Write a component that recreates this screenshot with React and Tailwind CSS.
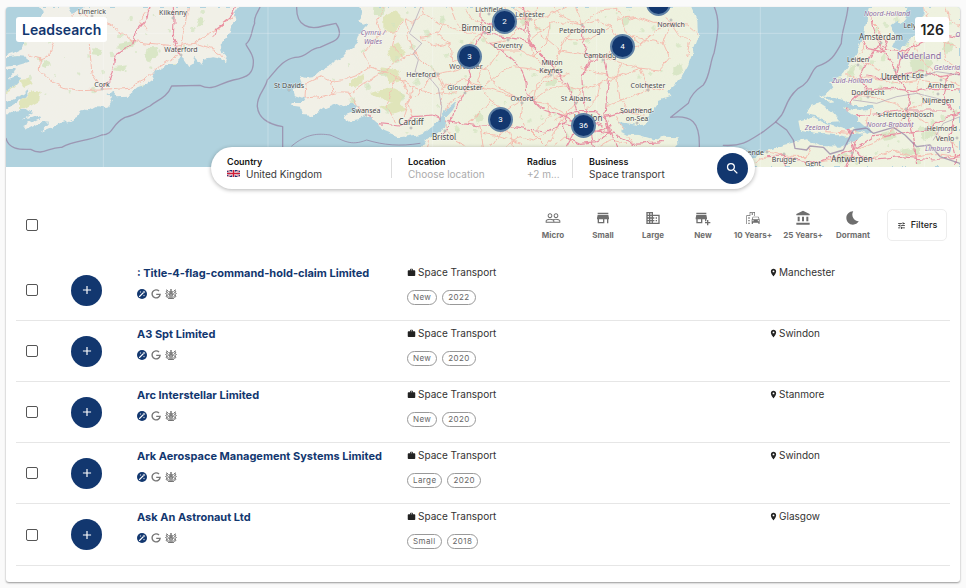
import {
  MdPeopleOutline, MdStore, MdDomain, MdAddBusiness, MdOutlineEmojiTransportation,
  MdAccountBalance, MdBedtime, MdTune, MdSearch, MdLocationOn, MdWork, MdAdd,
} from "react-icons/md";

const companies = [
  { name: ": Title-4-flag-command-hold-claim Limited", tags: ["New", "2022"], town: "Manchester" },
  { name: "A3 Spt Limited", tags: ["New", "2020"], town: "Swindon" },
  { name: "Arc Interstellar Limited", tags: ["New", "2020"], town: "Stanmore" },
  { name: "Ark Aerospace Management Systems Limited", tags: ["Large", "2020"], town: "Swindon" },
  { name: "Ask An Astronaut Ltd", tags: ["Small", "2018"], town: "Glasgow" },
];

const categories = [
  { label: "Micro", Icon: MdPeopleOutline },
  { label: "Small", Icon: MdStore },
  { label: "Large", Icon: MdDomain },
  { label: "New", Icon: MdAddBusiness },
  { label: "10 Years+", Icon: MdOutlineEmojiTransportation },
  { label: "25 Years+", Icon: MdAccountBalance },
  { label: "Dormant", Icon: MdBedtime },
];

const clusters = [
  { x: 486, y: 2, count: "2" },
  { x: 451, y: 37, count: "3" },
  { x: 604, y: 27, count: "4" },
  { x: 482, y: 100, count: "3" },
  { x: 565, y: 106, count: "36" },
  { x: 640, y: -16, count: "" },
];

// Map geometry uses three units to a pixel.
const land = [
  "M120 21L132 40 110 60 92 72 65 80 72 104 50 112 70 128 66 145 35 160 18 165V172L50 168 78 170 82 185 45 196 18 200V212L45 208 40 220 24 236 50 226 70 232 40 262 18 276V308L50 292 80 276 92 268 70 296 35 318 18 330V345L45 332 85 328 100 335 66 362 110 346 125 352 70 378 78 390 125 366 148 368 122 396 160 380 190 364 200 368 235 350 245 330 262 334 290 318 322 324 336 296 322 285 340 278 352 292 385 290 392 278 412 262 440 252 465 235 455 215 480 208 500 195 530 195 545 170 556 180 568 198 578 192 582 170 604 195 606 176 640 172 662 176 675 187 680 165 662 148 658 135 680 112 690 95 694 75 706 65 702 45 717 21Z",
  "M1078 21L1086 45 1075 62 1102 72 1078 104 1070 128 1052 145 1030 172 1002 186 990 198 960 212 938 232 915 234 900 230 908 252 900 266 880 270 884 284 918 296 912 306 880 306 868 316 900 320 905 345 940 348 970 326 1010 310 1030 322 1052 306 1074 318 1062 336 1035 346 1042 362 1080 358 1108 346 1132 366 1152 392 1200 412 1250 404 1282 392 1310 370 1335 335 1372 302 1358 328 1338 350 1332 384 1310 400 1280 418 1255 450 1240 501H2000L2020 450 2038 430 2036 412 1990 410 1960 418 1915 404 1880 404 1860 394 1880 378 1930 376 1952 340 1978 302 2014 290 2002 274 2040 238 2064 196 2078 160 2094 115 2092 62 2074 21Z",
  "M2606 21L2600 60 2590 110 2570 160 2532 218 2490 248 2500 262 2478 284 2510 306 2540 330 2570 350 2580 376 2540 392 2500 376 2460 362 2440 368 2450 382 2480 402 2530 408 2560 420 2520 440 2460 438 2420 418 2390 422 2350 432 2310 450 2280 462 2240 480 2220 501H2880V21Z",
  "M2430 320L2460 312 2500 338 2520 364 2490 366 2460 350 2420 342Z",
  "M2395 362L2440 350 2480 372 2530 386 2518 398 2450 400 2400 388Z",
  "M2460 284L2500 284 2530 306 2490 312Z",
];

const inlets = [
  "M2722 21H2768V70L2752 100 2715 132 2698 152 2676 140 2690 110 2672 76 2690 62 2702 72 2718 50Z",
  "M2470 286L2530 300 2560 318 2620 318V326L2560 330 2512 316Z",
  "M2500 326L2560 346 2600 382 2620 394 2604 402 2560 386 2530 362Z",
  "M2410 405L2470 414 2540 410 2590 398 2560 428 2520 424 2460 432Z",
  "M1858 366L1920 376 1990 360 1980 420 1920 404 1880 402Z",
  "M205 21L215 42 250 24V21Z",
];

const woods = [
  "M355 128L400 120 406 130 380 150 345 145Z", "M440 140L470 142 475 165 450 185 436 165Z", "M600 50L612 55 602 78 590 85Z",
  "M280 145L305 150 300 166 278 162Z", "M345 200L382 196 370 212 342 208Z", "M130 180L152 190 140 204 126 198Z",
  "M18 245L50 228 68 232 35 270 18 280Z", "M60 300L100 272 122 275 118 300 60 332Z", "M18 175L50 168 82 180 40 192Z",
  "M60 240L90 236 98 252 72 264Z", "M1150 50L1190 30 1210 60 1180 100 1150 90Z", "M1160 150L1195 130 1215 160 1180 190Z",
  "M1050 238L1092 222 1086 250 1050 262Z", "M1110 280L1170 260 1215 282 1200 312 1160 300Z", "M1140 202L1190 210 1205 240 1165 250Z",
  "M1140 320L1200 300 1218 330 1180 345Z", "M1120 21H1160L1142 50 1118 40Z", "M1420 350L1445 330 1450 350 1430 370Z",
  "M1640 240L1672 232 1665 258 1640 262Z", "M1860 60L1882 50 1890 72 1870 80Z", "M2020 205L2042 190 2050 214 2020 230Z",
  "M2730 180L2762 160 2800 190 2770 222 2738 214Z", "M2830 120L2860 130 2850 160 2826 150Z", "M2640 400L2682 390 2690 412 2650 420Z",
  "M2760 400L2800 380 2810 400 2772 424Z", "M2550 200L2568 188 2560 220 2540 232Z", "M2700 450L2752 440 2760 462 2715 470Z",
  "M1560 60L1580 42 1588 60 1570 78Z", "M1750 350L1780 340 1785 360 1760 370Z", "M2500 470L2540 462 2550 480 2510 490Z",
];

// Small scattered copses, spread over each region by a fixed stride.
const copses = Array.from({ length: 190 }, (_, i) => {
  const regions = [[60, 620, 30, 350], [1000, 400, 30, 370], [1400, 660, 30, 400], [2520, 350, 30, 460]];
  const [x, w, y, h] = regions[i % 4];
  return { x: x + ((i * 137) % w), y: y + ((i * 89) % h), r: 3 + ((i * 7) % 6) };
});

const minorRoads = [
  "M85 165L122 176 118 210 150 242 192 262 240 272 305 270", "M160 132L148 165 122 176", "M268 130L272 180 276 220 305 265",
  "M240 40L330 75 400 125 530 138 580 130 640 92 700 52", "M305 268L390 262 430 242 470 205 535 165", "M580 130L640 150 676 172",
  "M535 165L550 100 565 21", "M450 21L420 60 440 90", "M645 110L650 90 680 60", "M170 100L210 60 230 30",
  "M918 250L960 230 990 245 1030 238 1080 220 1110 200 1090 160 1120 120 1140 100 1130 60 1150 21", "M918 250L915 294 960 290 1010 278 1050 280 1090 250 1130 230 1170 200 1210 170 1250 160",
  "M1050 280L1080 330 1130 330", "M1110 200L1160 215 1190 230 1240 260 1300 285 1370 275", "M1190 230L1170 280 1160 320 1190 370",
  "M1140 100L1190 95 1215 60 1240 70 1270 40 1265 21", "M1215 60L1230 130 1255 170 1310 222 1330 260 1322 310", "M1310 222L1370 210 1410 195",
  "M1310 222L1280 250 1250 290", "M1270 40L1330 75 1400 100 1450 100", "M1310 100L1350 130 1355 180 1410 195", "M1260 110L1300 140 1350 130",
  "M1410 195L1460 210 1490 260 1570 300 1600 270 1660 230 1710 220", "M1395 275L1450 262 1500 275 1568 300", "M1395 275L1350 310 1330 360",
  "M1568 300L1560 350 1580 390", "M1568 300L1520 330 1500 380", "M1568 300L1640 310 1690 340", "M1500 150L1460 210", "M1500 150L1560 150 1600 170 1655 220",
  "M1600 170L1590 120 1650 70 1700 65 1745 75", "M1745 75L1700 115 1680 150 1655 220", "M1745 75L1790 60 1835 80 1860 130 1810 170",
  "M1745 75L1730 21", "M1745 75L1800 30 1850 25", "M1590 60L1640 50 1700 21", "M1590 60L1550 30 1540 21", "M1590 60L1550 90 1525 120",
  "M1810 170L1870 150 1920 135 1970 90 2010 70", "M1810 170L1870 190 1920 205 1945 270", "M1920 205L1980 210 2010 175 1990 130 2014 70",
  "M2014 70L2060 75 2090 100", "M2014 70L1980 40 1990 21", "M2014 70L2040 110 2070 120 2060 170", "M2014 70L1960 70 1910 50 1850 55",
  "M1655 220L1610 250 1600 300", "M1655 220L1700 260 1740 270 1800 250 1850 230 1920 205", "M1740 270L1728 310 1700 340 1660 360",
  "M1800 250L1790 300 1760 330", "M1860 300L1900 290 1945 270 1990 265", "M1860 300L1890 340 1930 345", "M1700 340L1660 400 1640 440",
  "M1540 370L1490 410 1470 440", "M1330 370L1360 420 1400 440", "M1330 370L1290 400 1280 440", "M1440 380L1450 440", "M1590 390L1620 420 1640 440",
  "M1400 30L1420 60 1450 75", "M1500 100L1540 60 1580 50", "M1500 100L1530 70 1510 21", "M1440 100L1400 140 1415 170", "M1440 100L1470 130 1520 120",
  "M1350 21L1370 70 1400 100", "M1330 75L1310 100 1260 110", "M1450 200L1430 240 1470 300 1520 330", "M1330 260L1390 240 1450 262",
  "M1540 200L1500 220 1450 262", "M1540 200L1620 210 1655 220", "M1470 300L1440 340 1400 370", "M1600 300L1640 270 1700 260",
  "M1600 60L1620 100 1680 150 1740 160 1810 170", "M1640 310L1650 350 1610 390", "M1450 400L1510 410 1560 430", "M1520 440L1560 410 1600 420 1640 400",
  "M1860 60L1880 100 1920 135", "M1860 130L1900 110 1990 130", "M1870 190L1850 230 1860 300 1820 320", "M1850 25L1880 60 1910 50",
  "M1650 70L1640 130 1600 170", "M1700 115L1760 120 1835 80", "M1740 200L1790 220 1850 230", "M1500 380L1530 400 1540 440", "M1550 21L1600 40 1620 21",
  "M1660 21L1680 45 1745 75", "M1850 350L1870 390 1900 430", "M1660 440L1700 410 1720 430", "M1800 440L1830 420 1880 430",
  "M990 245L1000 280", "M1190 95L1180 140 1210 170", "M1240 260L1225 310 1240 350", "M1200 230L1230 290 1210 350",
  "M2610 60L2640 90 2635 120", "M2600 130L2570 170 2600 190 2640 210", "M2540 220L2570 240 2600 230 2650 240 2700 250 2760 240 2820 250",
  "M2560 285L2620 290 2680 310 2720 330 2780 310 2840 300", "M2720 330L2690 380 2640 420 2560 450", "M2720 330L2780 370 2830 420 2880 440",
  "M2770 21L2790 80 2830 110 2840 180 2880 210", "M2790 80L2740 130 2760 180 2820 230 2880 260", "M2350 468L2300 455", "M2350 468L2420 470 2430 445",
  "M2440 490L2540 470 2600 480 2680 450 2740 470 2800 460 2880 470", "M2700 180L2720 150 2760 130", "M2840 21L2850 60 2880 80", "M2820 120L2870 140",
  "M2760 240L2750 280 2790 310", "M2610 330L2600 380 2550 400 2480 395", "M2300 470L2260 490",
];

const majorRoads = [
  "M305 265L330 240 342 190 345 165 402 126 410 90 440 55 450 21", "M535 160L520 110 522 60 520 21", "M645 108L650 85 690 55 706 21",
  "M1106 342L1130 370 1200 378 1240 350 1300 345 1340 365 1440 378 1530 380 1580 390 1640 396 1690 370 1720 375",
  "M1325 415L1345 375 1390 280 1415 230 1405 190 1425 140 1450 95 1440 60 1440 21",
  "M1440 60L1480 75 1520 70 1575 95 1580 60 1570 21", "M1450 95L1490 110 1540 115 1575 120 1620 160 1680 225 1710 270 1730 330",
  "M1470 130L1520 165 1560 200 1578 245 1580 280 1630 330 1700 350 1730 370", "M1580 60L1590 130 1640 180 1680 225",
  "M1745 75L1750 130 1770 180 1745 230 1750 290 1760 340", "M1810 170L1825 240 1820 290 1815 350 1830 400 1850 440",
  "M1800 165L1770 190 1745 230", "M1815 350L1870 335 1920 330", "M1690 380L1700 345 1740 335 1790 335 1820 360 1825 400 1790 425 1740 430 1700 410Z",
  "M1735 375L1700 440", "M1770 390L1840 400 1900 430 1990 425", "M1735 340L1750 370 1770 400 1780 440", "M1710 360L1760 360 1810 378", "M1720 400L1790 395 1830 380",
  "M2640 130L2620 160 2600 190 2580 230 2600 270 2560 300 2530 350 2550 400 2560 450", "M2640 140L2680 190 2690 230 2730 290 2720 330",
  "M2640 130L2660 150 2700 155 2740 140 2780 120 2820 100 2880 110", "M2600 270L2680 265 2740 275 2800 265 2880 270",
  "M2690 230L2650 235 2600 225", "M2690 230L2760 210 2820 230 2880 220", "M2560 450L2620 410 2700 400 2780 390 2840 350 2880 340",
  "M2560 450L2600 480 2700 470 2800 480 2880 470", "M2560 450L2500 470 2440 490 2350 468", "M2530 350L2600 345 2720 330 2840 330",
  "M2720 330L2740 400 2750 490", "M2840 230L2830 290 2860 340 2850 410 2870 490", "M2640 130L2620 90 2610 40", "M2690 230L2700 180 2740 140",
  "M2560 450L2540 501", "M2560 450L2570 410 2530 380", "M2360 501L2350 468 2300 470", "M2590 120L2600 145 2650 155 2665 125 2640 110",
];

const borders = [
  "M18 415C25 445 55 450 92 448C130 470 145 440 185 442C225 420 260 425 305 405C345 402 330 375 375 352C410 345 425 330 450 318C470 300 500 295 515 258L600 256C640 275 655 250 700 240C745 232 762 220 760 180C757 155 735 135 738 132C758 115 752 95 764 70C760 50 775 35 780 21",
  "M890 21C888 80 930 90 970 78L1008 70C1025 95 1020 115 1000 124L960 142C925 145 925 172 885 172C845 180 830 210 802 240C795 270 770 285 772 320C775 350 800 372 848 380V440",
  "M875 438C920 400 955 400 990 405C1030 420 1050 440 1100 420C1150 435 1200 440 1260 430",
  "M2143 21C2160 60 2155 100 2142 160C2130 185 2130 230 2110 255C2080 275 2070 290 2065 310L2012 352C2075 345 2100 365 2098 440",
  "M2544 21C2540 65 2525 90 2524 130C2505 165 2495 185 2450 200C2430 215 2435 245 2395 265C2360 295 2360 320 2345 345L2327 366 2290 395C2250 420 2230 440 2170 436",
  "M2327 366L2360 390 2380 420 2385 445 2420 450 2430 438 2470 442 2490 462 2530 450 2550 410 2560 390 2600 384 2620 400 2680 382 2715 405 2750 440 2790 435 2820 470 2880 490",
  "M1262 21L1240 75 1228 100 1265 130 1240 160 1255 180 1245 215 1290 235 1315 265 1325 320 1320 365",
  "M2650 240L2700 225 2750 235 2810 215 2880 225", "M2560 300L2630 310 2690 290 2750 280 2830 300", "M2800 420L2830 370 2880 350",
];

const cities = [
  ["Limerick", 92, 14, 1], ["Kilkenny", 173, 15, 1], ["Waterford", 181, 52, 1], ["Cork", 102, 87, 1], ["St Davids", 289, 88, 1],
  ["Swansea", 366, 113, 1], ["Cardiff", 411, 125, 2], ["Bristol", 444, 140, 2], ["Hereford", 421, 77, 1], ["Gloucester", 465, 90, 1],
  ["Worcester", 466, 69, 1], ["Birmingham", 485, 31, 2], ["Coventry", 508, 48, 1], ["Lichfield", 489, 12, 1], ["Leicester", 530, 17, 1],
  ["Peterborough", 582, 33, 1], ["Cambridge", 602, 58, 1], ["Norwich", 671, 27, 1], ["Milton", 552, 65, 1], ["Keynes", 551, 73, 1],
  ["Oxford", 522, 101, 1], ["St Albans", 576, 101, 1], ["Colchester", 648, 88, 1], ["Southend-", 637, 113, 1], ["on-Sea", 637, 121, 1],
  ["London", 588, 121, 2], ["Amsterdam", 881, 40, 2], ["Lelystad", 917, 28, 1], ["Leiden", 858, 62, 1], ["Utrecht", 895, 80, 2], ["Ede", 918, 78, 1],
  ["Arnhem", 941, 88, 1], ["Dordrecht", 868, 95, 1], ["Nijmegen", 938, 103, 1], ["'s-Hertogenbosch", 905, 117, 1], ["Helmond", 942, 131, 1],
  ["Venlo", 945, 141, 1], ["Oostende", 748, 155, 1], ["Brugge", 784, 162, 1], ["Gent", 813, 166, 1], ["Antwerpen", 852, 162, 2],
];
const regions = [
  ["Cymru /", 373, 35], ["Wales", 373, 44], ["Noord-Holland", 887, 16], ["Zuid-Holland", 852, 83], ["Gelderland", 951, 70],
  ["Noord-Brabant", 890, 127], ["Zeeland", 817, 130], ["Limburg", 938, 151], ["Overijssel", 970, 37],
];
const townDots = [
  [92, 16], [173, 18], [181, 55], [102, 89], [289, 90], [366, 115], [411, 128], [445, 131], [438, 74], [465, 93], [485, 33], [508, 40],
  [489, 14], [582, 25], [603, 60], [671, 20], [551, 75], [522, 103], [576, 103], [648, 90], [637, 123], [881, 43], [895, 70], [926, 75],
  [941, 80], [938, 94], [906, 109], [926, 129], [957, 138], [784, 154], [852, 153], [767, 152], [868, 97], [858, 65], [530, 19],
];

function RegionMap() {
  return (
    <svg viewBox="6 7 954 160" preserveAspectRatio="xMidYMid slice" className="block h-full w-full" role="img" aria-label="Map of company locations">
      <defs>
        <clipPath id="land">
          {land.map((d) => <path key={d} d={d} />)}
        </clipPath>
        <linearGradient id="ground" gradientUnits="userSpaceOnUse" x1="0" x2="2880" y1="0" y2="0">
          <stop offset="0" stopColor="#f1f0e9" />
          <stop offset=".36" stopColor="#f1f0e6" />
          <stop offset=".5" stopColor="#edf1dd" />
          <stop offset="1" stopColor="#eff2e0" />
        </linearGradient>
        <filter id="rugged" x="-2%" y="-5%" width="104%" height="110%">
          <feTurbulence type="fractalNoise" baseFrequency="0.12" numOctaves="3" seed="4" />
          <feDisplacementMap in="SourceGraphic" scale="6" xChannelSelector="R" yChannelSelector="G" />
        </filter>
      </defs>
      <rect x="6" y="7" width="954" height="160" fill="#b0d2de" />
      <g filter="url(#rugged)">
        <g transform="scale(.33333)" fill="none" strokeLinejoin="round" strokeLinecap="round">
          {land.map((d) => <path key={d} d={d} fill="url(#ground)" />)}
          <g clipPath="url(#land)">
            {woods.map((d, i) => <path key={d} d={d} fill={i > 5 && i < 16 ? "#e0e5ba" : "#d9e6c6"} />)}
            {copses.map((c) => <circle key={c.x + "-" + c.y} cx={c.x} cy={c.y} r={c.r} fill="#d3e4c0" fillOpacity=".7" />)}
            {minorRoads.map((d) => <path key={d} d={d} stroke="#f5bdb0" strokeWidth="3" />)}
            {majorRoads.map((d) => <path key={d} d={d} stroke="#e88fa2" strokeWidth="3.500" />)}
          </g>
          {inlets.map((d) => <path key={d} d={d} fill="#b0d2de" />)}
        </g>
      </g>
      <g transform="scale(.33333)" fill="none" strokeLinejoin="round" strokeLinecap="round">
        {borders.map((d, i) => (
          <path key={d} d={d} stroke="#9583a4" strokeOpacity={i > 5 ? ".5" : ".75"} strokeWidth={i > 5 || i === 2 ? "3" : "4"} />
        ))}
        <path d="M18 100H2880M310 21V501M804 21V501M1298 21V501M1790 21V501M2281 21V501M2774 21V501" stroke="#fff" strokeOpacity=".4" strokeWidth="2" />
      </g>
      {townDots.map(([x, y]) => <circle key={x + "-" + y} cx={x} cy={y} r="1" fill="#fff" stroke="#777" strokeWidth=".5" />)}
      <g textAnchor="middle" stroke="#fff" strokeOpacity=".6" strokeWidth="1" paintOrder="stroke" className="font-['Noto_Sans',sans-serif]">
        {cities.map(([name, x, y, size]) => (
          <text key={name} x={x} y={y} fill="#484848" fontSize={size === 2 ? 8 : 7}>{name}</text>
        ))}
        {regions.map(([name, x, y]) => (
          <text key={name} x={x} y={y} fill="#8b6c9e" fontSize="7" fontStyle="italic">{name}</text>
        ))}
        <text x="919" y="59" fill="#8b6c9e" fontSize="9">Nederland</text>
      </g>
    </svg>
  );
}

function Flag() {
  return (
    <svg viewBox="0 0 26 14" className="h-[7px] w-[13px] shrink-0" aria-hidden="true">
      <path fill="#1d2f6f" d="M0 0h26v14H0z" />
      <path d="M0 0l26 14M26 0L0 14" stroke="#fff" strokeWidth="3" />
      <path d="M0 0l26 14M26 0L0 14" stroke="#cf1b36" strokeWidth="1" />
      <path d="M13 0v14M0 7h26" stroke="#fff" strokeWidth="5" />
      <path d="M13 0v14M0 7h26" stroke="#cf1b36" strokeWidth="3" />
    </svg>
  );
}

function CompanyLinks() {
  return (
    <div className="flex items-center gap-1">
      <a href="#enrich" aria-label="Enrich">
        <svg viewBox="0 0 20 20" className="size-[10px]">
          <circle cx="10" cy="10" r="10" fill="#12376f" />
          <path d="M5 15l7-7" stroke="#fff" strokeWidth="2.2" strokeLinecap="round" />
          <path d="M14 3l.8 2.2L17 6l-2.2.8L14 9l-.8-2.2L11 6l2.200-.8zM7 4l.6 1.400L9 6l-1.400.6L7 8l-.6-1.400L5 6l1.400-.6zM14 11l.6 1.400L16 13l-1.400.6L14 15l-.6-1.400L12 13l1.400-.6z" fill="#fff" />
        </svg>
      </a>
      <a href="#google" aria-label="Google">
        <svg viewBox="0 0 20 20" className="size-[10px]" fill="none" stroke="#767676" strokeWidth="2.8">
          <path d="M16 4.200A8 8 0 1 0 18.200 10.800H10.500" />
        </svg>
      </a>
      <a href="#register" aria-label="Company register">
        <svg viewBox="0 0 24 20" className="h-[10px] w-3" fill="none" stroke="#6a6a6a" strokeWidth="1.700">
          <path d="M12 0v4M10 2h4M9 5h6v2H9zM9 9h6v4q0 3-3 4-3-1-3-4zM12 9v7M9 12h6M7 4L5 7l2 3-2 3 2 4M5 3L2 4l2 3-3 2 3 2-2 4 4 2M6 19h12M17 4l2 3-2 3 2 3-2 4M19 3l3 1-2 3 3 2-3 2 2 4-4 2M3 1l3 3M21 1l-3 3M8 17l4 2 4-2" />
        </svg>
      </a>
    </div>
  );
}

const boxClass = "block size-[12px] appearance-none rounded-[2px] border-1 border-[#555] bg-white checked:bg-[#12376f]";
const fieldLabel = "block text-[9px] leading-3 font-semibold text-[#161616]";
const fieldInput = "block w-full appearance-none bg-transparent p-0 text-[10px] leading-3 text-[#3a3a3a] outline-none placeholder:text-[#ababab]";

export default function App() {
  return (
    <div className="min-h-screen bg-[#fafafa] px-[6px] pt-[7px] pb-[5px] font-[Inter,'Noto_Sans',sans-serif] text-[#333]">
      <main className="rounded-[3px] bg-white pb-4 shadow-[0_1px_2px_rgba(0,0,0,0.4)]">
        <section className="relative h-[160px] overflow-hidden rounded-t-[3px]">
          <RegionMap />
          {clusters.map((c) => (
            <button key={c.x} type="button" aria-label="Company cluster" style={{ left: c.x, top: c.y }} className="absolute size-[25px] rounded-full border-2 border-[#6082a6] bg-[#12376f] font-[Roboto,sans-serif] text-[8px] leading-none text-white">
              {c.count}
            </button>
          ))}
          <h1 className="absolute top-[10px] left-[10px] rounded-[3px] bg-white px-[6px] text-[14px] leading-[25px] font-semibold text-[#12376f]">Leadsearch</h1>
          <p className="absolute top-[10px] right-[11px] rounded-[3px] bg-white px-[5px] text-[14px] leading-[25px] font-semibold text-[#222]">126</p>
        </section>

        <form className="relative mx-auto -mt-5 flex h-[42px] w-[544px] max-w-full items-center rounded-full bg-white pr-[7px] pl-4 shadow-[0_1px_4px_rgba(0,0,0,0.3)]" onSubmit={(e) => e.preventDefault()}>
          <div className="w-[164px] pb-px">
            <label htmlFor="country" className={fieldLabel}>Country</label>
            <div className="flex items-center gap-[6px]">
              <Flag />
              <select id="country" className={fieldInput}><option>United Kingdom</option></select>
            </div>
          </div>
          <div className="h-5 w-px bg-[#ddd]" />
          <div className="ml-4 w-[119px] pb-px">
            <label htmlFor="location" className={fieldLabel}>Location</label>
            <input id="location" placeholder="Choose location" className={fieldInput} />
          </div>
          <div className="w-[45px] pb-px">
            <label htmlFor="radius" className={fieldLabel}>Radius</label>
            <input id="radius" placeholder="+2 m..." className={fieldInput} />
          </div>
          <div className="h-5 w-px bg-[#ddd]" />
          <div className="ml-4 min-w-0 flex-1 pb-px">
            <label htmlFor="business" className={fieldLabel}>Business</label>
            <input id="business" defaultValue="Space transport" className={fieldInput} />
          </div>
          <button type="submit" aria-label="Search" className="flex size-[31px] shrink-0 items-center justify-center rounded-full bg-[#12376f] text-white">
            <MdSearch className="size-[15px]" />
          </button>
        </form>

        <div className="mt-5 flex items-center px-5 pr-[13px]">
          <input type="checkbox" aria-label="Select all" className={boxClass} />
          <div className="ml-auto flex">
            {categories.map(({ label, Icon }) => (
              <button key={label} type="button" className="flex w-[50px] flex-col items-center gap-[3px] text-[#6e6e6e]">
                <Icon className="size-4" />
                <span className="text-[8px] leading-3 font-bold whitespace-nowrap">{label}</span>
              </button>
            ))}
          </div>
          <button type="button" className="ml-[9px] flex h-8 w-[60px] items-center justify-center gap-[5px] rounded-[5px] border border-[#ededed] text-[9px] font-medium text-[#222]">
            <MdTune className="size-[9px]" />
            Filters
          </button>
        </div>

        <ul className="mx-[10px] mt-[19px]">
          {companies.map((c) => (
            <li key={c.name} className="grid min-h-[61px] grid-cols-[45px_66px_270px_1fr_181px] items-center border-b border-[#e6e6e6] pl-[10px] last:min-h-[62px]">
              <input type="checkbox" aria-label={"Select " + c.name} className={boxClass} />
              <button type="button" aria-label={"Add " + c.name} className="flex size-[31px] items-center justify-center rounded-full bg-[#12376f] text-white">
                <MdAdd className="size-[14px]" />
              </button>
              <div className="self-start pt-[5px]">
                <h2 className="text-[11px] leading-4 font-bold whitespace-nowrap text-[#12376f]">{c.name}</h2>
                <div className="mt-2"><CompanyLinks /></div>
              </div>
              <div className="self-start pt-1">
                <p className="flex items-center gap-[2px] text-[10px] leading-4"><MdWork className="size-[9px] text-[#222]" />Space Transport</p>
                <div className="mt-[10px] flex gap-[5px]">
                  {c.tags.map((t) => (
                    <span key={t} className="rounded-full border border-[#999] px-[5px] text-[8px] leading-[13px] tracking-wider text-[#666]">{t}</span>
                  ))}
                </div>
              </div>
              <p className="flex items-center gap-px self-start pt-1 text-[10px] leading-4"><MdLocationOn className="size-[9px] text-[#222]" />{c.town}</p>
            </li>
          ))}
        </ul>
      </main>
    </div>
  );
}
